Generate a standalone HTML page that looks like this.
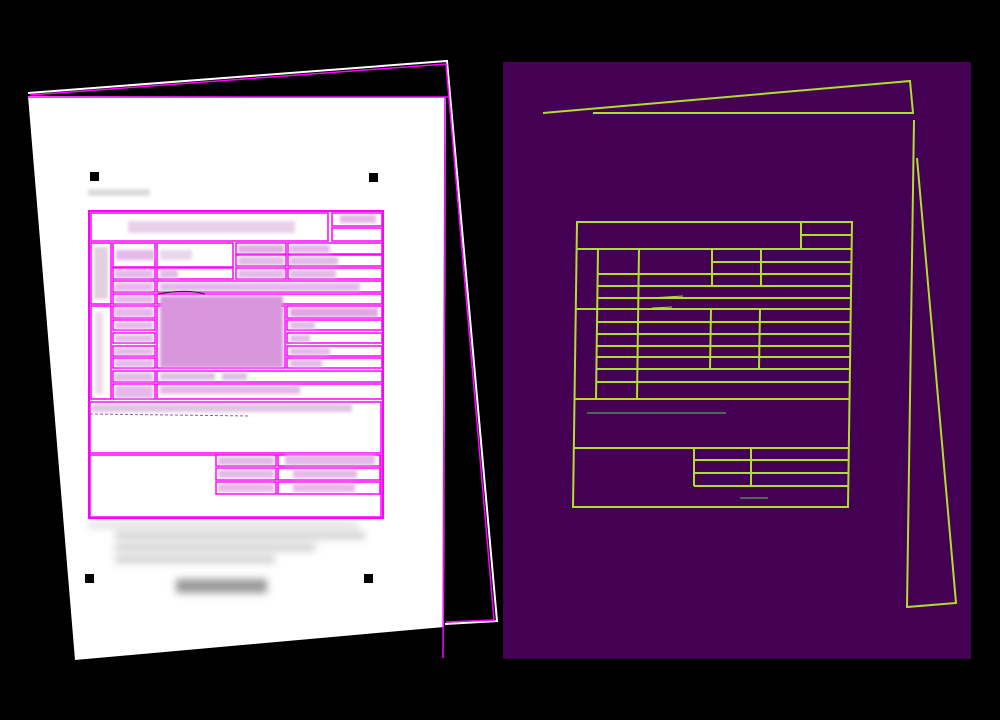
<!DOCTYPE html>
<html><head><meta charset="utf-8"><style>
html,body{margin:0;padding:0;background:#000;width:1000px;height:720px;overflow:hidden}
svg{display:block}
</style></head><body>
<svg width="1000" height="720" viewBox="0 0 1000 720" xmlns="http://www.w3.org/2000/svg">
<defs>
<filter id="b" x="-20%" y="-50%" width="140%" height="200%"><feGaussianBlur stdDeviation="1.5"/></filter>
<filter id="b2" x="-20%" y="-50%" width="140%" height="200%"><feGaussianBlur stdDeviation="4"/></filter>
</defs>
<rect width="1000" height="720" fill="#000"/>
<polyline points="28,93 447,61 497,621 445,624" fill="none" stroke="#fff" stroke-width="2"/>
<polyline points="30,95 446,64 494,620 446,622" fill="none" stroke="#f0f" stroke-width="1.5"/>
<polygon points="28,96 446,97 444,627 75,660" fill="#fff"/>
<line x1="28" y1="97" x2="448" y2="97" stroke="#f0f" stroke-width="1.5"/>
<line x1="445" y1="97" x2="443" y2="658" stroke="#f0f" stroke-width="1.5"/>
<rect x="90" y="172" width="9" height="9" fill="#000"/>
<rect x="369" y="173" width="9" height="9" fill="#000"/>
<rect x="85" y="574" width="9" height="9" fill="#000"/>
<rect x="364" y="574" width="9" height="9" fill="#000"/>
<g filter="url(#b)">
<rect x="88" y="189" width="62" height="7" fill="#ddd"/>
<rect x="90" y="436" width="90" height="7" fill="#ddd"/>
<rect x="90" y="470" width="105" height="8" fill="#ddd"/>
<rect x="252" y="503" width="125" height="8" fill="#e6c0e8"/>
<rect x="316" y="418" width="62" height="7" fill="#ddd"/>
</g>
<g filter="url(#b2)">
<rect x="88" y="522" width="270" height="6" fill="#ddd"/>
<rect x="115" y="532" width="250" height="7" fill="#ccc"/>
<rect x="115" y="544" width="200" height="7" fill="#ccc"/>
<rect x="115" y="556" width="160" height="7" fill="#ccc"/>
<rect x="176" y="579" width="91" height="14" fill="#999"/>
</g>
<g fill="#fff" stroke="#f0f" stroke-width="1.5">
<rect x="89" y="211" width="294" height="307" stroke-width="2"/>
<rect x="91" y="213" width="237" height="28"/>
<rect x="332" y="213" width="50" height="13"/>
<rect x="332" y="228" width="50" height="13"/>
<rect x="91" y="243" width="20" height="61"/>
<rect x="91" y="306" width="20" height="93"/>
<rect x="113" y="243" width="42" height="24"/>
<rect x="113" y="268" width="42" height="11"/>
<rect x="113" y="281" width="42" height="11"/>
<rect x="113" y="294" width="42" height="10"/>
<rect x="113" y="306" width="42" height="12"/>
<rect x="113" y="320" width="42" height="10"/>
<rect x="113" y="333" width="42" height="10"/>
<rect x="113" y="346" width="42" height="10"/>
<rect x="113" y="358" width="42" height="10"/>
<rect x="113" y="371" width="42" height="11"/>
<rect x="113" y="384" width="42" height="15"/>
<rect x="157" y="243" width="76" height="24"/>
<rect x="157" y="268" width="76" height="11"/>
<rect x="236" y="243" width="50" height="11"/>
<rect x="236" y="255" width="50" height="11"/>
<rect x="236" y="268" width="50" height="11"/>
<rect x="288" y="243" width="94" height="11"/>
<rect x="288" y="255" width="94" height="11"/>
<rect x="288" y="268" width="94" height="11"/>
<rect x="157" y="281" width="225" height="11"/>
<rect x="157" y="294" width="225" height="10"/>
<rect x="157" y="306" width="128" height="62"/>
<rect x="287" y="306" width="95" height="12"/>
<rect x="287" y="320" width="95" height="10"/>
<rect x="287" y="333" width="95" height="10"/>
<rect x="287" y="346" width="95" height="10"/>
<rect x="287" y="358" width="95" height="10"/>
<rect x="157" y="371" width="225" height="11"/>
<rect x="157" y="384" width="225" height="15"/>
<rect x="90" y="402" width="291" height="51"/>
<rect x="90" y="455" width="291" height="62"/>
<rect x="216" y="455" width="60" height="11"/>
<rect x="278" y="455" width="102" height="11"/>
<rect x="216" y="468" width="60" height="12"/>
<rect x="278" y="468" width="102" height="12"/>
<rect x="216" y="482" width="60" height="12"/>
<rect x="278" y="482" width="102" height="12"/>
</g>
<g fill="#e4b8e8" filter="url(#b)">
<rect x="340" y="215" width="36" height="8"/>
<rect x="128" y="221" width="167" height="12" fill="#e8d0ea"/>
<rect x="94" y="247" width="14" height="52" fill="#e0d0e0"/>
<rect x="95" y="312" width="8" height="82" fill="#eadcec"/>
<rect x="116" y="250" width="38" height="10"/>
<rect x="160" y="250" width="32" height="10" fill="#e8d8ea"/>
<rect x="115" y="270" width="38" height="8"/>
<rect x="115" y="283" width="38" height="8"/>
<rect x="115" y="296" width="38" height="7"/>
<rect x="115" y="308" width="38" height="9"/>
<rect x="115" y="322" width="38" height="7"/>
<rect x="115" y="335" width="38" height="7"/>
<rect x="115" y="348" width="38" height="7"/>
<rect x="115" y="360" width="38" height="7"/>
<rect x="115" y="373" width="38" height="8"/>
<rect x="115" y="386" width="38" height="12"/>
<rect x="160" y="270" width="18" height="8"/>
<rect x="238" y="245" width="46" height="8" fill="#dcaee0"/>
<rect x="238" y="257" width="46" height="8"/>
<rect x="238" y="270" width="46" height="8"/>
<rect x="290" y="245" width="40" height="8"/>
<rect x="290" y="257" width="48" height="8"/>
<rect x="290" y="270" width="46" height="8"/>
<rect x="160" y="283" width="200" height="8" fill="#ddbde2"/>
<rect x="290" y="308" width="88" height="9" fill="#d9a8dd"/>
<rect x="290" y="322" width="25" height="7"/>
<rect x="290" y="335" width="20" height="7"/>
<rect x="290" y="348" width="40" height="7"/>
<rect x="290" y="360" width="32" height="7"/>
<rect x="160" y="373" width="55" height="7"/>
<rect x="222" y="373" width="25" height="7"/>
<rect x="160" y="386" width="140" height="8"/>
<rect x="92" y="404" width="260" height="8" fill="#e0c4e4"/>
<rect x="218" y="457" width="56" height="8"/>
<rect x="285" y="455" width="90" height="10"/>
<rect x="218" y="470" width="56" height="8"/>
<rect x="293" y="470" width="64" height="8"/>
<rect x="218" y="484" width="56" height="8"/>
<rect x="293" y="484" width="62" height="8"/>
</g>
<rect x="160" y="296" width="123" height="72" fill="#d896dc" filter="url(#b)"/>
<path d="M158,294 C175,291 190,290 205,294" stroke="#222" stroke-width="1" fill="none"/>
<path d="M90,414 L250,416" stroke="#a050a8" stroke-width="1" stroke-dasharray="3 2" fill="none"/>
<rect x="503" y="62" width="468" height="597" fill="#440154"/>
<g stroke="#b0dd2f" stroke-width="2" fill="none">
<polyline points="543,113 910,81 913,113 593,113"/>
<polyline points="914,120 907,607 956,603 917,158"/>
<polygon points="577,222 852,222 848,507 573,507"/>
<line x1="577" y1="249" x2="852" y2="249"/>
<line x1="801" y1="222" x2="801" y2="249"/>
<line x1="801" y1="235" x2="852" y2="235"/>
<line x1="712" y1="262" x2="851" y2="262"/>
<line x1="597" y1="274" x2="851" y2="274"/>
<line x1="597" y1="286" x2="851" y2="286"/>
<line x1="597" y1="298" x2="851" y2="298"/>
<line x1="576" y1="309" x2="851" y2="309"/>
<line x1="597" y1="322" x2="850" y2="322"/>
<line x1="597" y1="334" x2="850" y2="334"/>
<line x1="597" y1="346" x2="850" y2="346"/>
<line x1="597" y1="357" x2="850" y2="357"/>
<line x1="597" y1="369" x2="850" y2="369"/>
<line x1="596" y1="382" x2="849" y2="382"/>
<line x1="575" y1="399" x2="849" y2="399"/>
<line x1="574" y1="448" x2="848" y2="448"/>
<line x1="694" y1="460" x2="848" y2="460"/>
<line x1="694" y1="473" x2="848" y2="473"/>
<line x1="694" y1="486" x2="848" y2="486"/>
<line x1="598" y1="249" x2="596" y2="399"/>
<line x1="639" y1="249" x2="637" y2="399"/>
<line x1="712" y1="249" x2="712" y2="286"/>
<line x1="761" y1="249" x2="761" y2="286"/>
<line x1="711" y1="309" x2="710" y2="369"/>
<line x1="760" y1="309" x2="759" y2="369"/>
<line x1="694" y1="448" x2="694" y2="486"/>
<line x1="751" y1="448" x2="751" y2="486"/>
</g>
<g stroke="#b0dd2f" stroke-width="1" fill="none">
<line x1="587" y1="413" x2="726" y2="413" stroke="#5ec962"/>
<line x1="650" y1="298" x2="683" y2="296"/>
<line x1="652" y1="308" x2="672" y2="307"/>
<line x1="740" y1="498" x2="768" y2="498" stroke="#5ec962"/>
</g>
</svg>
</body></html>
